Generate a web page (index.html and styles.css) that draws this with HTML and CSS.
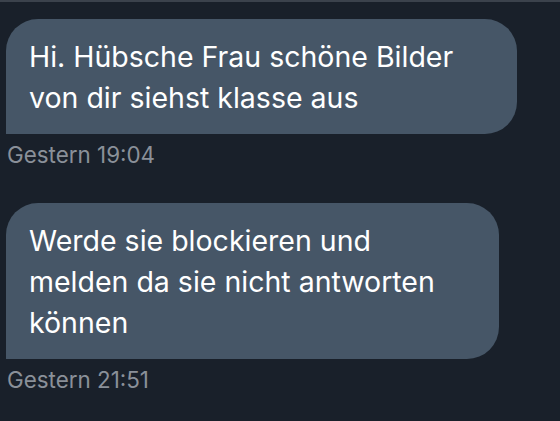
FILE: index.html
```html
<!DOCTYPE html>
<html lang="de">
<head>
    <meta charset="UTF-8">
    <meta name="viewport" content="width=device-width, initial-scale=1.0">
    <title>Nachrichten</title>
    <link rel="stylesheet" href="styles.css">
</head>
<body>
    <div class="chat">
        <div class="message">
            <div class="bubble bubble-wide">Hi. Hübsche Frau schöne Bilder<br>von dir siehst klasse aus</div>
            <div class="time">Gestern 19:04</div>
        </div>
        <div class="message">
            <div class="bubble bubble-narrow">Werde sie blockieren und<br>melden da sie nicht antworten<br>können</div>
            <div class="time">Gestern 21:51</div>
        </div>
    </div>
</body>
</html>
```

FILE: styles.css
```css
html, body {
    margin: 0;
    padding: 0;
}
body {
    background-color: #19202a;
    font-family: Inter, "Noto Sans", sans-serif;
    color: #fff;
    height: 421px;
    overflow: hidden;
}
.chat {
    border-top: 2px solid #3b424c;
    padding: 17px 0 0 6px;
}
.message {
    margin-bottom: 35px;
}
.bubble {
    background-color: #465667;
    border-radius: 32px 32px 32px 0;
    padding: 17px 24px 16px 23px;
    font-size: 28.5px;
    line-height: 41px;
    box-sizing: border-box;
}
.bubble-wide {
    width: 511px;
}
.bubble-narrow {
    width: 493px;
}
.time {
    color: #8a9099;
    font-size: 22.4px;
    line-height: 26px;
    margin-top: 8px;
    padding-left: 1px;
}
```
